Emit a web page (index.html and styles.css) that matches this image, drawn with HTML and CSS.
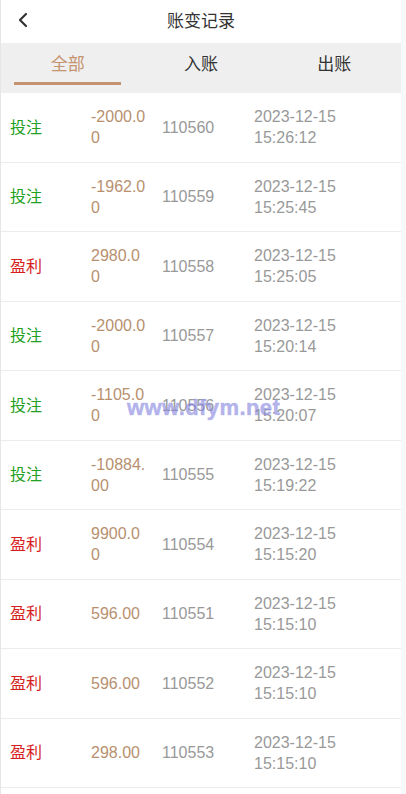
FILE: index.html
```html
<!DOCTYPE html>
<html lang="zh">
<head>
<meta charset="utf-8">
<title>账变记录</title>
<link rel="stylesheet" href="styles.css">
</head>
<body>
<div class="page">
  <header class="topbar">
    <span class="back">
      <svg width="12" height="16" viewBox="0 0 12 16"><path d="M9 2 L3 8 L9 14" fill="none" stroke="#333" stroke-width="2.2" stroke-linecap="round" stroke-linejoin="round"/></svg>
    </span>
    <h1 class="title">账变记录</h1>
  </header>
  <nav class="tabs">
    <div class="tab active">全部</div>
    <div class="tab">入账</div>
    <div class="tab">出账</div>
  </nav>
  <ul class="list">
    <li class="row"><span class="type bet">投注</span><span class="amt">-2000.00</span><span class="no">110560</span><span class="date">2023-12-15 15:26:12</span></li>
    <li class="row"><span class="type bet">投注</span><span class="amt">-1962.00</span><span class="no">110559</span><span class="date">2023-12-15 15:25:45</span></li>
    <li class="row"><span class="type win">盈利</span><span class="amt">2980.00</span><span class="no">110558</span><span class="date">2023-12-15 15:25:05</span></li>
    <li class="row"><span class="type bet">投注</span><span class="amt">-2000.00</span><span class="no">110557</span><span class="date">2023-12-15 15:20:14</span></li>
    <li class="row"><span class="type bet">投注</span><span class="amt">-1105.00</span><span class="no">110556</span><span class="date">2023-12-15 15:20:07</span></li>
    <li class="row"><span class="type bet">投注</span><span class="amt">-10884.00</span><span class="no">110555</span><span class="date">2023-12-15 15:19:22</span></li>
    <li class="row"><span class="type win">盈利</span><span class="amt">9900.00</span><span class="no">110554</span><span class="date">2023-12-15 15:15:20</span></li>
    <li class="row"><span class="type win">盈利</span><span class="amt">596.00</span><span class="no">110551</span><span class="date">2023-12-15 15:15:10</span></li>
    <li class="row"><span class="type win">盈利</span><span class="amt">596.00</span><span class="no">110552</span><span class="date">2023-12-15 15:15:10</span></li>
    <li class="row"><span class="type win">盈利</span><span class="amt">298.00</span><span class="no">110553</span><span class="date">2023-12-15 15:15:10</span></li>
  </ul>
  <div class="watermark">www.dfym.net</div>
</div>
</body>
</html>
```
FILE: styles.css
```css
html, body {
  margin: 0;
  padding: 0;
  background: #f7f8fa;
  height: 100%;
  overflow: hidden;
}
body {
  font-family: "Liberation Sans", Arial, "Noto Sans CJK SC", sans-serif;
}
.page {
  position: relative;
  width: 400px;
  min-height: 794px;
  background: #fff;
  border-left: 1px solid #e6e6e6;
}
.topbar {
  height: 43px;
  display: flex;
  align-items: center;
  justify-content: center;
  position: relative;
  box-sizing: border-box;
  padding-bottom: 4px;
}
.back {
  position: absolute;
  left: 16px;
  top: 12px;
  display: flex;
}
.title {
  margin: 0;
  font-size: 17px;
  font-weight: normal;
  color: #333;
}
.tabs {
  display: flex;
  height: 50px;
  background: #efefef;
}
.tab {
  flex: 1;
  display: flex;
  justify-content: center;
  padding-top: 7px;
  font-size: 17px;
  color: #333;
  position: relative;
  box-sizing: border-box;
}
.tab.active {
  color: #c49370;
}
.tab.active::after {
  content: "";
  position: absolute;
  left: 13px;
  right: 13px;
  top: 39px;
  height: 3px;
  background: #c49370;
}
.list {
  list-style: none;
  margin: 0;
  padding: 0;
}
.row {
  display: grid;
  grid-template-columns: 81px 71px 92px 130px;
  align-items: center;
  height: 69.5px;
  box-sizing: border-box;
  padding-left: 9px;
  border-bottom: 1px solid #ececec;
  font-size: 16px;
  line-height: 21px;
}
.type.bet { color: #22a022; }
.type.win { color: #d61e1e; }
.amt {
  color: #b8906f;
  width: 56px;
  word-break: break-all;
}
.no { color: #999; }
.date { color: #999; }
.watermark {
  position: absolute;
  left: 126px;
  top: 395px;
  font-size: 22px;
  font-weight: bold;
  color: rgba(115, 115, 215, 0.55);
  -webkit-text-stroke: 0.6px rgba(170, 170, 240, 0.7);
  letter-spacing: 0.4px;
  pointer-events: none;
}
```
